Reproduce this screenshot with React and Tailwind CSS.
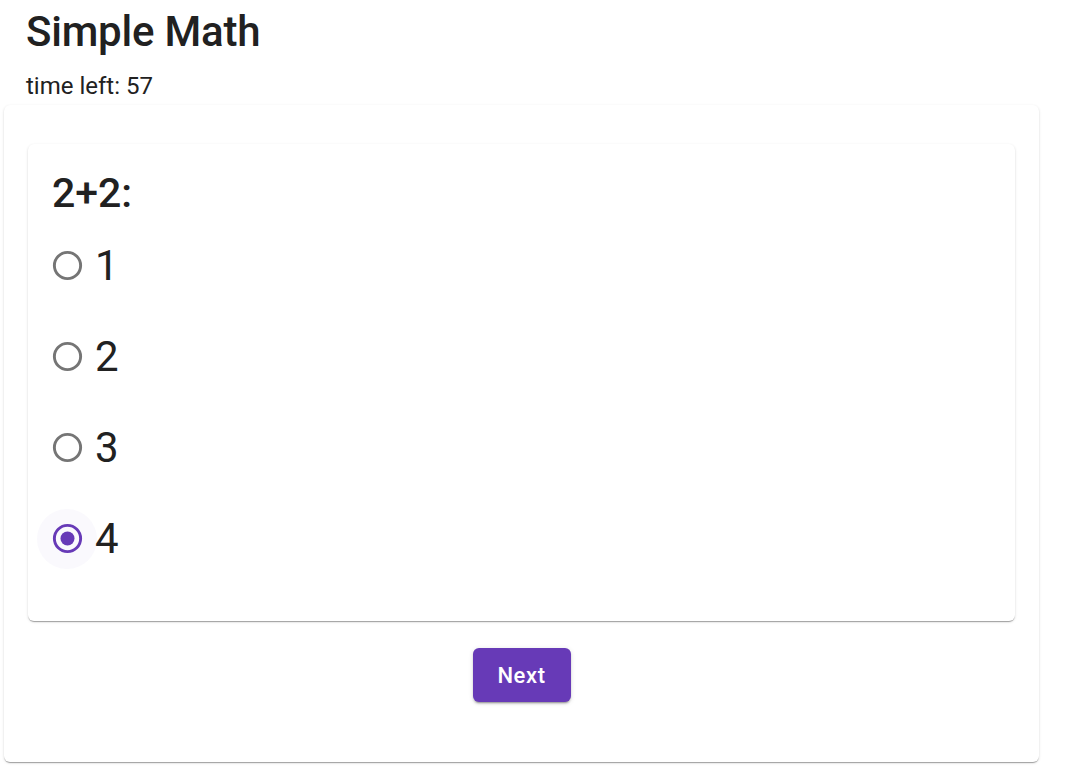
import React, { useState } from "react";

const shadow1 =
  "shadow-[0px_2px_1px_-1px_rgba(0,0,0,0.2),0px_1px_1px_0px_rgba(0,0,0,0.14),0px_1px_3px_0px_rgba(0,0,0,0.12)]";

function Radio({ checked }) {
  return (
    <span
      className={`flex h-[60px] w-[60px] items-center justify-center rounded-full ${
        checked ? "bg-[#673ab7]/[0.03]" : ""
      }`}
    >
      <svg width="35" height="35" viewBox="0 0 24 24">
        <circle
          cx="12"
          cy="12"
          r="9"
          fill="none"
          stroke={checked ? "#673ab7" : "#757575"}
          strokeWidth="2"
        />
        {checked && <circle cx="12" cy="12" r="4.8" fill="#673ab7" />}
      </svg>
    </span>
  );
}

export default function App() {
  const [value, setValue] = useState("4");
  const options = ["1", "2", "3", "4"];
  return (
    <div className="min-h-[774px] bg-white font-['Roboto',sans-serif] text-[#212121]">
      <div className="pl-[26px]">
        <h1 className="pt-[4px] text-[42px] font-medium leading-[56px] tracking-[-0.2px]">
          Simple Math
        </h1>
        <div className="mt-[12px] text-[24px] leading-[28px]">time left: 57</div>
      </div>
      <div
        className={`ml-[4px] mt-[5px] w-[1035px] rounded-[6px] bg-white px-[24px] pb-[60px] pt-[39px] ${shadow1}`}
      >
        <div className={`rounded-[6px] bg-white px-[24px] pb-[37px] pt-[26px] ${shadow1}`}>
          <div className="text-[41px] font-medium leading-[46px]">2+2:</div>
          <div className="mt-[4px] flex flex-col">
            {options.map((o) => (
              <label
                key={o}
                className="-ml-[15px] flex h-[91px] cursor-pointer items-center"
                onClick={() => setValue(o)}
              >
                <Radio checked={value === o} />
                <span className="-ml-[2px] text-[42px] leading-[48px]">{o}</span>
              </label>
            ))}
          </div>
        </div>
        <div className="mt-[27px] flex justify-center">
          <button className="h-[54px] w-[98px] rounded-[6px] bg-[#673ab7] text-[22px] font-medium tracking-[0.6px] text-white shadow-[0px_3px_1px_-2px_rgba(0,0,0,0.2),0px_2px_2px_0px_rgba(0,0,0,0.14),0px_1px_5px_0px_rgba(0,0,0,0.12)]">
            Next
          </button>
        </div>
      </div>
    </div>
  );
}
